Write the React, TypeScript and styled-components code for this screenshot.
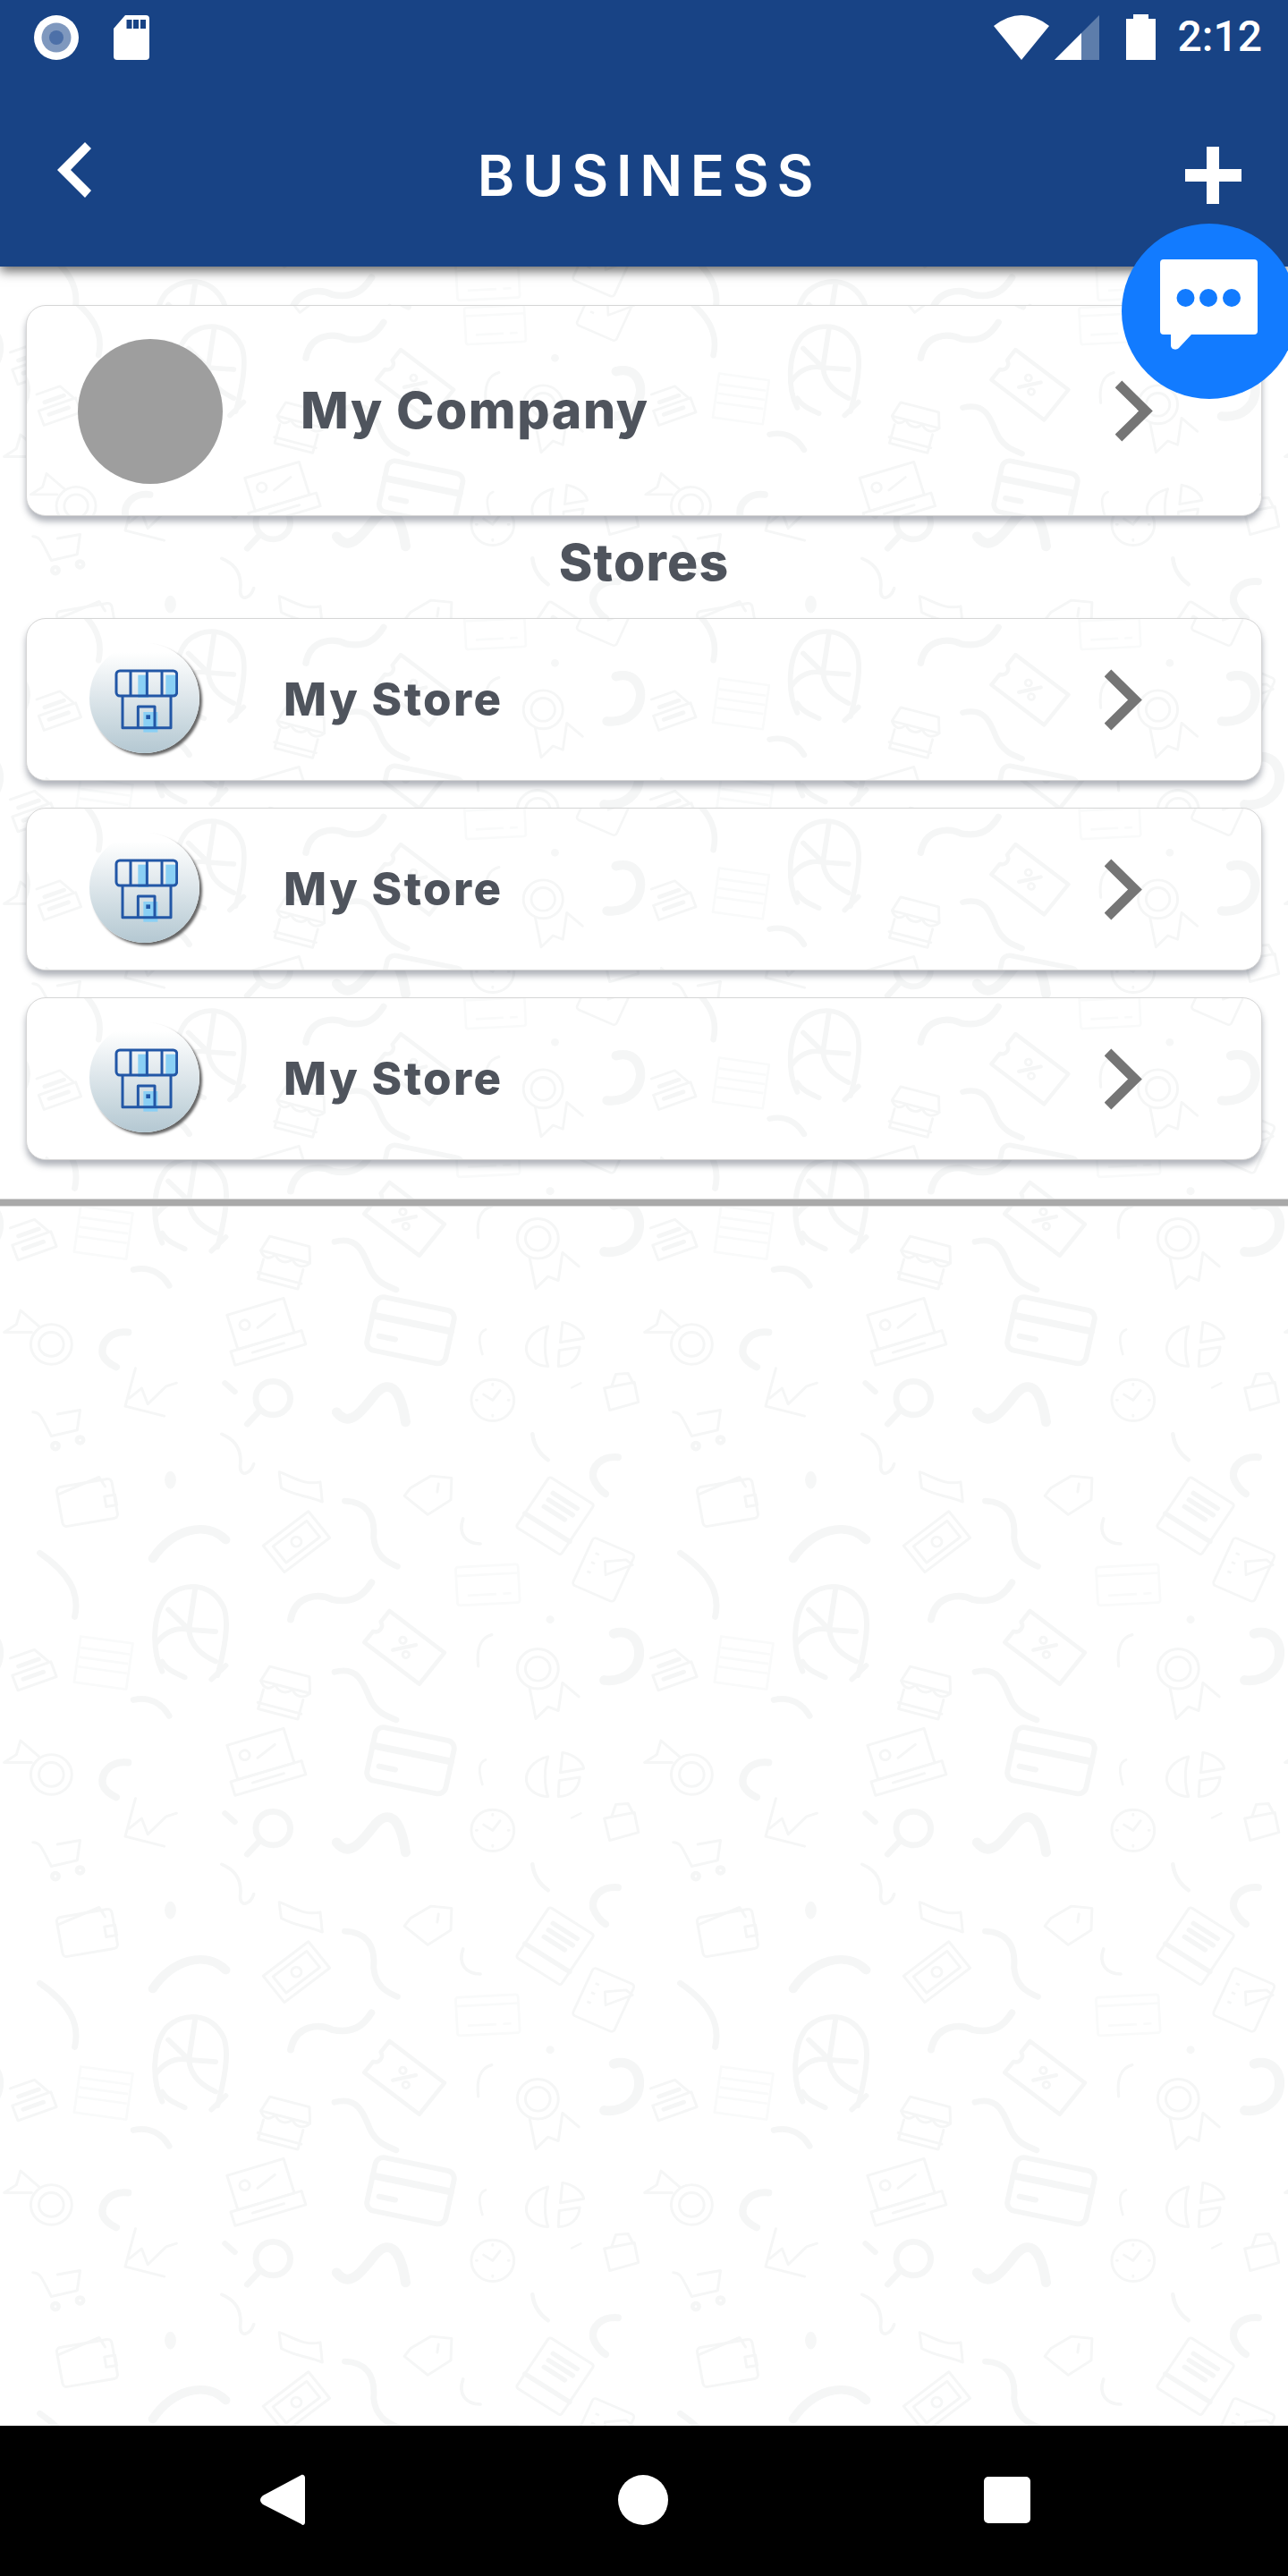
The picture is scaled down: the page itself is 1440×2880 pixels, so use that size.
import React from "react";
import styled, { createGlobalStyle } from "styled-components";

const Global = createGlobalStyle`
  html, body { margin: 0; padding: 0; background: #fff; }
`;

const Page = styled.div`
  position: relative;
  width: 1440px;
  height: 2880px;
  overflow: hidden;
  display: flex;
  flex-direction: column;
  font-family: Inter, "Liberation Sans", sans-serif;
  background: #fff;
`;

const TopArea = styled.header`
  position: relative;
  z-index: 2;
  background: #184385;
  box-shadow: 0 5px 12px rgba(0, 0, 0, 0.6);
`;

const StatusBar = styled.div`
  height: 84px;
  box-sizing: border-box;
  padding: 17px 29px 0 38px;
  display: flex;
  align-items: flex-start;
  justify-content: space-between;
`;

const StatusGroup = styled.div`
  display: flex;
  align-items: flex-start;
  gap: ${(p: { $gap: number }) => p.$gap}px;
`;

const Clock = styled.span`
  font-family: Roboto, sans-serif;
  font-weight: 500;
  font-size: 48px;
  line-height: 50px;
  color: #fff;
  margin-left: 19px;
  margin-top: -1px;
`;

const Battery = styled.svg`
  margin-left: 24px;
  margin-top: -1px;
`;

const TitleBar = styled.div`
  height: 214px;
  box-sizing: border-box;
  padding: 10px 52px 0 64px;
  display: grid;
  grid-template-columns: 1fr auto 1fr;
  align-items: center;
`;

const BackIcon = styled.svg`
  margin-top: -12px;
`;

const Title = styled.h1`
  margin: 0;
  font-weight: 600;
  font-size: 63px;
  letter-spacing: 8.8px;
  line-height: 70px;
  color: #fff;
`;

const PlusIcon = styled.svg`
  justify-self: end;
`;

const ChatFab = styled.div`
  position: absolute;
  z-index: 3;
  top: 250px;
  left: 1254px;
  width: 196px;
  height: 196px;
  border-radius: 50%;
  background: #127bff;
  display: flex;
  align-items: flex-start;
  padding: 40px 0 0 43px;
  box-sizing: border-box;
`;

const Main = styled.main`
  position: relative;
  flex: 1;
  overflow: hidden;
`;

const Wallpaper = styled.svg`
  position: absolute;
  inset: 0;
  z-index: 0;
`;

const Content = styled.div`
  position: relative;
  z-index: 1;
  display: flex;
  flex-direction: column;
`;

const Cards = styled.div`
  padding: 0 29px;
  display: flex;
  flex-direction: column;
  gap: ${(p: { $gap: number }) => p.$gap}px;
`;

const Card = styled.div`
  position: relative;
  overflow: hidden;
  box-sizing: border-box;
  border: 1.5px solid #d6d6d6;
  border-radius: 22px;
  background: #fff;
  box-shadow: 0 6px 7px rgba(70, 76, 92, 0.42);
`;

const CompanyCard = styled(Card)`
  height: 236px;
  margin-top: 43px;
`;

const StoreCard = styled(Card)`
  height: 182px;
`;

const CompanyRow = styled.div`
  position: relative;
  z-index: 1;
  height: 100%;
  box-sizing: border-box;
  display: flex;
  align-items: center;
  padding: 0 121px 0 57px;
  gap: 87px;
`;

const StoreRow = styled(CompanyRow)`
  padding: 0 133px 0 70px;
  gap: 94px;
`;

const CompanyAvatar = styled.div`
  width: 162px;
  height: 162px;
  border-radius: 50%;
  background: #9e9e9e;
  flex: none;
  margin-top: 2px;
`;

const StoreAvatar = styled.div`
  width: 123px;
  height: 123px;
  border-radius: 50%;
  flex: none;
  margin-top: -4px;
  box-sizing: border-box;
  padding: 5px 0 0 3px;
  display: flex;
  align-items: center;
  justify-content: center;
  background: linear-gradient(#ffffff 8%, #b4c8d2 100%);
  box-shadow: 3px 3px 3px rgba(0, 0, 0, 0.6);
`;

const Name = styled.span<{ $size: number; $track: number }>`
  flex: 1;
  font-weight: 800;
  color: #4f545d;
  font-size: ${(p) => p.$size}px;
  letter-spacing: ${(p) => p.$track}px;
  line-height: 1.2;
`;

const SectionLabel = styled.h2`
  margin: 0;
  height: 114px;
  box-sizing: border-box;
  padding-bottom: 12px;
  display: flex;
  align-items: center;
  justify-content: center;
  font-weight: 800;
  font-size: 57px;
  letter-spacing: 1.200px;
  color: #4f545d;
`;

const Divider = styled.div`
  height: 9px;
  margin-top: 43px;
  background: #a9a9a9;
  border-top: 1px solid #d8d8d8;
  border-bottom: 1px solid #d8d8d8;
  box-sizing: border-box;
`;

const NavBar = styled.nav`
  height: 168px;
  background: #000;
  flex: none;
  display: flex;
  align-items: center;
  box-sizing: border-box;
  padding: 0 0 2px 291px;
`;

const NavBack = styled.svg``;
const NavHome = styled.div`
  width: 56px;
  height: 56px;
  border-radius: 50%;
  background: #fff;
  margin-left: 350px;
`;
const NavRecent = styled.div`
  width: 52px;
  height: 52px;
  border-radius: 5px;
  background: #fff;
  margin-left: 353px;
`;

const Chevron = () => (
  <svg width="42" height="69" viewBox="0 0 42 69" style={{ flex: "none" }}>
    <path d="M3.500 4.500L34 34.500L3.500 64.500" fill="none" stroke="#757575" strokeWidth="11" />
  </svg>
);

const StoreGlyph = () => (
  <svg width="72" height="72" viewBox="200 205 216 216">
    <g fill="#8ad0f5">
      <rect x="282" y="228" width="35" height="76" />
      <rect x="375" y="228" width="36" height="72" />
      <rect x="300" y="352" width="48" height="68" />
    </g>
    <g fill="none" stroke="#2257a6" strokeWidth="9" strokeLinejoin="round">
      <rect x="209" y="214" width="203" height="84" rx="12" />
      <path d="M257 214V298M312 214V298M362 214V298" />
      <path d="M230 298V405H392V298" />
      <path d="M282 405V334H338V405" />
    </g>
    <rect x="309" y="362" width="14" height="14" fill="#2257a6" />
  </svg>
);

const Motifs = () => (
  <>
    {/* brush strokes */}
    <g fill="none" stroke="#f5f6f6" strokeLinecap="round" strokeLinejoin="round">
      <path strokeWidth="15" d="M815 198C870 183 885 223 900 263C915 298 940 308 965 318" />
      <path strokeWidth="15" d="M325 268C365 258 395 278 412 308" />
      <path strokeWidth="18" d="M312 425C270 420 245 450 250 480C255 495 268 505 283 512" />
      <path strokeWidth="6" d="M1183 418C1165 425 1165 445 1175 480" />
      <path strokeWidth="24" d="M820 625C850 665 880 625 910 585C945 540 975 560 988 650" />
      <path strokeWidth="8" d="M540 680C575 695 590 720 585 760C585 790 610 780 618 755" />
      <path strokeWidth="10" d="M1297 680C1300 710 1315 730 1335 745" />
      <path strokeWidth="18" d="M1505 738C1465 735 1440 760 1445 790C1450 805 1462 822 1475 830" />
      <path strokeWidth="15" d="M840 848C890 850 915 880 910 940C915 985 940 1000 968 1012" />
      <path strokeWidth="8" d="M1128 892C1115 930 1135 955 1170 955" />
      <path strokeWidth="22" d="M372 992C420 920 500 895 550 945" />
      <path strokeWidth="15" d="M97 978C170 1030 195 1080 182 1138" />
      <path strokeWidth="17" d="M708 1145C720 1080 780 1080 810 1095C860 1105 885 1085 905 1052" />
      <path strokeWidth="7" d="M1198 1183C1170 1190 1160 1220 1165 1262" />
      <path strokeWidth="24" d="M1495 1180C1545 1165 1570 1215 1550 1260C1530 1295 1495 1300 1472 1297" />
      <path strokeWidth="14" d="M548 552L572 574" />
      <path strokeWidth="5" d="M1392 564L1415 552" />
    </g>
    <g fill="#f6f7f7">
      <circle cx="1340" cy="1145" r="10" />
      <ellipse cx="415" cy="795" rx="14" ry="22" />
    </g>
    {/* outlined icons */}
    <g fill="none" stroke="#f5f6f6" strokeWidth="6.500" strokeLinecap="round" strokeLinejoin="round">
      <g transform="translate(1000 420) rotate(12)">
        <rect x="-98" y="-68" width="196" height="136" rx="20" strokeWidth="13" />
        <path d="M-96 -18H96" strokeWidth="18" />
        <path d="M-72 30H-32" strokeWidth="14" />
      </g>
      <g transform="translate(640 420) rotate(-17)">
        <rect x="-72" y="-62" width="144" height="90" />
        <rect x="-90" y="28" width="180" height="36" />
        <circle cx="-38" cy="-26" r="12" />
        <path d="M-10 -10L40 -30M-40 46H40" />
      </g>
      <g transform="translate(125 455)">
        <circle r="50" />
        <circle r="30" />
        <path d="M-48 -30L-115 -30L-85 -50L-75 -85L-30 -45" />
      </g>
      <g transform="translate(1310 190)">
        <circle r="50" />
        <circle r="30" />
        <path d="M-20 48L-5 125L25 95L50 105L60 35L100 70" />
      </g>
      <path d="M330 515L305 610L400 635M315 590L345 565L360 605L405 560L430 552" />
      <g strokeWidth="15">
        <circle cx="665" cy="590" r="42" />
        <path d="M632 622L602 655" />
      </g>
      <g transform="translate(1200 595)">
        <circle r="52" />
        <path d="M0 0L-22 -14M0 0L18 -24" />
        <path d="M0 -40V-38M0 38V40M-40 0H-38M38 0H40" />
      </g>
      <path d="M1335 410C1295 420 1280 450 1282 470C1285 495 1310 510 1335 510C1325 480 1325 440 1335 410ZM1370 400C1400 405 1420 425 1422 440L1365 450ZM1362 470L1412 462C1410 490 1390 510 1360 510Z" />
      <path d="M1472 565L1545 550L1555 600L1485 620ZM1490 560L1500 530L1530 528L1542 552" />
      <g transform="translate(140 650)">
        <path d="M-60 -25C-45 -25 -40 -15 -30 5L-15 35L48 20L55 -30L0 -20" />
        <circle cx="-5" cy="60" r="8" strokeWidth="10" />
        <circle cx="55" cy="45" r="8" strokeWidth="10" />
      </g>
      <g transform="translate(212 850) rotate(-10)">
        <rect x="-68" y="-48" width="136" height="100" rx="10" />
        <path d="M-68 -30L40 -56L50 -30M44 -6H70V20H44Z" />
      </g>
      <path d="M680 775C710 785 740 810 780 800L785 850C750 835 720 835 685 815Z" />
      <path d="M1000 815L1050 785L1100 790L1098 845L1042 882L985 835Z" />
      <path d="M1068 805L1065 825" />
      <g transform="translate(1352 885) rotate(33)">
        <rect x="-65" y="-75" width="130" height="150" rx="6" />
        <path d="M-35 -45H35M-35 -25H35M-35 -5H25M-65 35H65" strokeWidth="12" />
      </g>
      <g transform="translate(722 950) rotate(-38)">
        <rect x="-70" y="-42" width="140" height="84" />
        <rect x="-52" y="-26" width="104" height="52" />
        <circle r="12" />
      </g>
      <g transform="translate(985 1215) rotate(38)">
        <path d="M-85 -50H85V50H-85V15C-70 10 -70 -10 -85 -15Z" strokeWidth="10" />
        <path d="M-18 22L18 -22" strokeWidth="10" />
        <circle cx="-14" cy="-12" r="8" />
        <circle cx="14" cy="12" r="8" />
      </g>
      <g transform="translate(465 1175)" strokeWidth="13">
        <path d="M-70 100C-95 50 -95 -40 -60 -85C-20 -125 50 -125 80 -60C95 -20 80 50 65 110" />
        <path d="M-55 -55L-5 -5L10 -105M-5 -5L60 0M-85 30C-60 -5 -30 -10 -5 -5C0 40 30 60 60 75M-70 75C-60 95 -35 105 -15 115M50 120L85 85" />
      </g>
      <g transform="translate(690 255) rotate(15)">
        <path d="M-50 -60H50L62 -20H-62Z" />
        <path d="M-62 -20C-50 -2 -35 -2 -25 -20C-15 -2 10 -2 18 -20C28 -2 50 -2 62 -20" />
        <path d="M-50 0V50H50V0M-55 35H55" />
      </g>
      <g transform="translate(75 190) rotate(-20)">
        <path d="M-38 -42L25 -42L48 0H-48V40H52V0" />
        <path d="M-26 -16H26M-26 18H26" strokeWidth="11" />
      </g>
    </g>
    {/* paler icons */}
    <g fill="none" stroke="#f9fafa" strokeWidth="6" strokeLinejoin="round">
      <g transform="translate(1188 1058) rotate(-3)">
        <rect x="-76" y="-48" width="152" height="96" rx="6" />
        <path d="M-76 -26H76M-50 24H20M36 24H56" />
      </g>
      <g transform="translate(252 175) rotate(8)">
        <rect x="-64" y="-58" width="128" height="116" />
        <path d="M-60 -30H60M-60 -6H60M-60 18H60" />
      </g>
      <g transform="translate(1470 1020) rotate(24)">
        <rect x="-55" y="-65" width="110" height="130" rx="8" stroke="#f5f6f6" />
        <path d="M-35 -30H-25M-35 -5H-25M-35 20H-25M-5 -20L40 -45L60 -40L10 10Z" stroke="#f5f6f6" />
      </g>
    </g>
  </>
);

const PAGE_ROWS = [-457, 23, 523, 1002, 1483, 1964];
const STORE_ROWS = [-441, 20];
const COMPANY_ROWS = [-432, 29];

type PatternProps = { rows: number[]; scale: number; width: number; height: number };

const Pattern = ({ rows, scale, width, height }: PatternProps) => (
  <Wallpaper width={width} height={height} viewBox={`0 0 ${width} ${height}`}>
    {rows.map((y) =>
      [-1, 0, 1, 2].map((c) => (
        <use
          key={`${y}-${c}`}
          href="#tile"
          transform={`translate(${c * 716 * scale} ${y}) scale(${0.459 * scale} ${0.446 * scale})`}
        />
      ))
    )}
  </Wallpaper>
);

export default function App() {
  return (
    <Page>
      <Global />
      <svg width="0" height="0" style={{ position: "absolute" }}>
        <defs>
          <g id="tile">
            <Motifs />
          </g>
        </defs>
      </svg>
      <TopArea>
        <StatusBar>
          <StatusGroup $gap={39}>
            <svg width="50" height="50" viewBox="0 0 50 50">
              <circle cx="25" cy="25" r="25" fill="#fff" />
              <circle cx="25" cy="25" r="16.500" fill="#7f98be" />
              <circle cx="25" cy="25" r="8" fill="#4d70a8" />
            </svg>
            <svg width="40" height="50" viewBox="0 0 40 50">
              <path d="M13 0H36a4 4 0 0 1 4 4V46a4 4 0 0 1-4 4H4a4 4 0 0 1-4-4V15Z" fill="#fff" />
              <path d="M14.500 5h6v10h-6zM22 5h6v10h-6zM30 5h6v10h-6z" fill="#184385" />
            </svg>
          </StatusGroup>
          <StatusGroup $gap={6}>
            <svg width="62" height="50" viewBox="0 0 62 50">
              <path d="M31 50L0 12Q31-12 62 12Z" fill="#fff" />
            </svg>
            <svg width="50" height="50" viewBox="0 0 50 50">
              <path d="M0 50L50 0V50Z" fill="#5d7dab" />
              <path d="M0 50L30 20V50Z" fill="#fff" />
            </svg>
            <Battery width="33" height="51" viewBox="0 0 33 51">
              <path d="M8 0H25V5H33V51H0V5H8Z" fill="#fff" />
            </Battery>
            <Clock>2:12</Clock>
          </StatusGroup>
        </StatusBar>
        <TitleBar>
          <BackIcon width="38" height="62" viewBox="0 0 38 62">
            <polygon points="31,0 38,7 15,31 38,54 31,62 0,31" fill="#fff" />
          </BackIcon>
          <Title>BUSINESS</Title>
          <PlusIcon width="63" height="64" viewBox="0 0 63 64">
            <path d="M24 0H38V25H63V39H38V64H24V39H0V25H24Z" fill="#fff" />
          </PlusIcon>
        </TitleBar>
      </TopArea>

      <ChatFab>
        <svg width="109" height="101" viewBox="0 0 109 101">
          <path
            d="M4 0H105a4 4 0 0 1 4 4V80a4 4 0 0 1-4 4H35L21 99c-3 3-9 2-9-3V84H4a4 4 0 0 1-4-4V4a4 4 0 0 1 4-4Z"
            fill="#fff"
          />
          <circle cx="28.500" cy="43" r="10" fill="#127bff" />
          <circle cx="54" cy="43" r="10" fill="#127bff" />
          <circle cx="80" cy="43" r="10" fill="#127bff" />
        </svg>
      </ChatFab>

      <Main>
        <Pattern rows={PAGE_ROWS} scale={1} width={1440} height={2414} />
        <Content>
          <Cards $gap={0}>
            <CompanyCard>
              <Pattern rows={COMPANY_ROWS} scale={0.96} width={1382} height={236} />
              <CompanyRow>
                <CompanyAvatar />
                <Name $size={57} $track={1.600}>My Company</Name>
                <Chevron />
              </CompanyRow>
            </CompanyCard>
          </Cards>
          <SectionLabel>Stores</SectionLabel>
          <Cards $gap={30}>
            {[0, 1, 2].map((i) => (
              <StoreCard key={i}>
                <Pattern rows={STORE_ROWS} scale={0.96} width={1382} height={182} />
                <StoreRow>
                  <StoreAvatar>
                    <StoreGlyph />
                  </StoreAvatar>
                  <Name $size={51} $track={2.400}>My Store</Name>
                  <Chevron />
                </StoreRow>
              </StoreCard>
            ))}
          </Cards>
          <Divider />
        </Content>
      </Main>

      <NavBar>
        <NavBack width="50" height="58" viewBox="0 0 50 58">
          <path d="M46 1C48 0 50 2 50 4V54C50 57 47 58 46 56L3 34C-1 31-1 27 3 24Z" fill="#fff" />
        </NavBack>
        <NavHome />
        <NavRecent />
      </NavBar>
    </Page>
  );
}
